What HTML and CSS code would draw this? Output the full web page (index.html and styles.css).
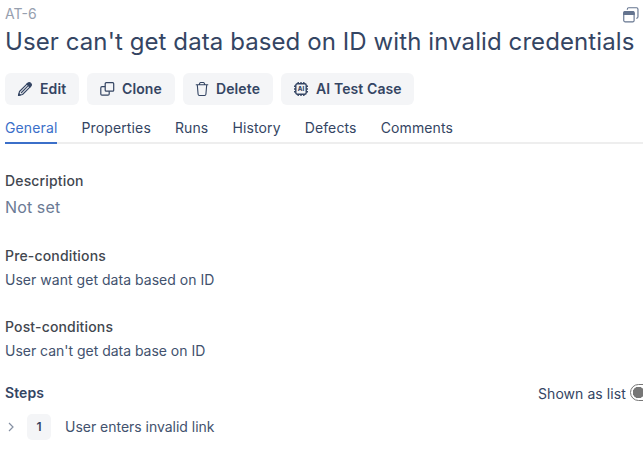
FILE: index.html
```html
<!DOCTYPE html>
<html lang="en">
<head>
<meta charset="utf-8">
<title>AT-6</title>
<link rel="stylesheet" href="styles.css">
</head>
<body>
<main class="case">
  <header class="top">
    <span class="case-id">AT-6</span>
    <svg class="window-icon" width="16" height="16" viewBox="0 0 17 17" fill="none" stroke="#64748f" stroke-width="1.2"><path d="M4.600 3V2.300Q4.600.8 6.100.8h8.300q1.500 0 1.500 1.500v8.100q0 1.500-1.500 1.500H14"/><rect x=".8" y="4.800" width="11" height="11" rx="1.500"/><path d="M.8 8V6.300Q.8 4.800 2.300 4.800h8q1.500 0 1.500 1.500V8z" fill="#64748f"/></svg>
  </header>
  <h1 class="title">User can't get data based on ID with invalid credentials</h1>
  <div class="actions">
    <button class="btn btn-edit"><svg width="16" height="16" viewBox="0 0 16 16" fill="none" stroke="#344563" stroke-width="1.1" stroke-linejoin="round"><path d="M1.500 14.500l1-4L10.400 2.600l3 3L5.500 13.500z"/><path d="M9.800 3.200l1.300-1.300q1.100-.9 2.200.1l.7.7q1 1.100.1 2.200l-1.300 1.300z" fill="#344563"/><path d="M4 12l6.800-6.800"/><path d="M1.500 14.500l.5-1.800 1.300 1.300z" fill="#344563"/></svg><span>Edit</span></button>
    <button class="btn btn-clone"><svg width="16" height="16" viewBox="0 0 16 16" fill="none" stroke="#344563" stroke-width="1.200"><rect x="6.200" y="1.700" width="8.500" height="8.500" rx="1"/><path d="M6.200 5.700H3q-1.200 0-1.200 1.200v6q0 1.200 1.200 1.200h6q1.200 0 1.200-1.200v-2.700"/></svg><span>Clone</span></button>
    <button class="btn btn-delete"><svg width="14" height="16" viewBox="0 0 14 16" fill="none" stroke="#344563" stroke-width="1.100" stroke-linecap="round"><path d="M1.200 3.800h11.600M4.200 3.500l.7-1.600q.2-.4.700-.4h2.800q.5 0 .7.400l.7 1.600M2.300 4l.8 9.300q.1 1.200 1.300 1.200h5.200q1.200 0 1.300-1.200L11.700 4"/></svg><span>Delete</span></button>
    <button class="btn btn-ai"><svg width="16" height="16" viewBox="0 0 16 16" fill="none" stroke="#344563" stroke-width="1.400"><rect x="2.800" y="2.800" width="10.400" height="10.400" rx="1.500"/><path d="M5.200 1v1.700M8 1v1.700M10.800 1v1.700M5.200 13.300V15M8 13.300V15M10.800 13.300V15M1 5.200h1.700M1 8h1.700M1 10.800h1.700M13.300 5.200H15M13.300 8H15M13.300 10.800H15"/><text class="chip-text" x="8" y="10.200" text-anchor="middle">AI</text></svg><span>AI Test Case</span></button>
  </div>
  <nav class="tabs">
    <a class="tab active">General</a>
    <a class="tab">Properties</a>
    <a class="tab">Runs</a>
    <a class="tab">History</a>
    <a class="tab">Defects</a>
    <a class="tab">Comments</a>
  </nav>
  <section class="field description">
    <h2>Description</h2>
    <p class="empty">Not set</p>
  </section>
  <section class="field pre">
    <h2>Pre-conditions</h2>
    <p>User want get data based on ID</p>
  </section>
  <section class="field post">
    <h2>Post-conditions</h2>
    <p>User can't get data base on ID</p>
  </section>
  <section class="steps">
    <div class="steps-head">
      <h2>Steps</h2>
      <div class="list-toggle"><span>Shown as list</span><i class="switch"></i></div>
    </div>
    <div class="step">
      <svg width="8" height="10" viewBox="0 0 8 10" fill="none" stroke="#8590a3" stroke-width="1.200"><path d="M2 1l4 4-4 4"/></svg>
      <span class="number">1</span>
      <span class="step-text">User enters invalid link</span>
    </div>
  </section>
</main>
</body>
</html>
```
FILE: styles.css
```css
* { box-sizing: border-box; }
body {
  margin: 0;
  background: #fff;
  color: #344563;
  font: 14px/20px Inter, sans-serif;
  letter-spacing: .1px;
  overflow: hidden;
}
h1, h2, p { margin: 0; }
.case { padding: 4px 0 0 5px; }
.top { display: flex; justify-content: space-between; height: 22px; padding-right: 4px; }
.case-id { color: #97a0af; letter-spacing: 0; }
.window-icon { margin-top: 3px; }
.title { font-size: 24px; line-height: 32px; font-weight: 400; letter-spacing: .09px; white-space: nowrap; }
.actions { display: flex; gap: 8px; margin-top: 15px; }
.btn {
  display: flex;
  align-items: center;
  height: 32px;
  padding: 0 0 0 12px;
  gap: 7px;
  border: 0;
  border-radius: 6px;
  background: #f4f5f7;
  color: #344563;
  font: 600 14px/20px Inter, sans-serif;
  letter-spacing: .1px;
  white-space: nowrap;
}
.btn-edit { width: 74px; }
.btn-clone { width: 88px; }
.btn-delete { width: 90px; }
.btn-ai { width: 133px; }
.chip-text { font: 800 6px Inter, sans-serif; letter-spacing: 0; fill: #344563; stroke: none; }
.tabs { display: flex; gap: 24px; height: 39px; padding-top: 13px; border-bottom: 2px solid #eee; letter-spacing: .13px; }
.tab { height: 26px; }
.tab.active { color: #3b6fc9; border-bottom: 2px solid #3b6fc9; }
.field h2 { color: #42474f; font-size: 14px; line-height: 20px; font-weight: 500; letter-spacing: .16px; }
.field p { color: #42526e; letter-spacing: .03px; }
.field .empty { color: #6b7a95; font-size: 16px; line-height: 24px; margin-top: 4px; letter-spacing: .12px; }
.description { margin-top: 27px; }
.pre { margin-top: 27px; }
.pre p, .post p { margin-top: 4px; }
.post { margin-top: 27px; }
.post p { letter-spacing: -.02px; }
.steps { margin-top: 22px; }
.steps-head { display: flex; justify-content: space-between; }
.steps h2 { font-size: 14px; line-height: 20px; font-weight: 600; }
.list-toggle { display: flex; margin-top: 1px; width: 105px; overflow: hidden; white-space: nowrap; letter-spacing: .06px; }
.switch {
  flex: none;
  width: 32px;
  height: 17px;
  margin: 0 0 0 4px;
  border: 1px solid #777;
  border-radius: 9px;
  background: radial-gradient(circle at 7.500px 7.500px, #777 5.500px, #fff 6px);
}
.step { display: flex; align-items: center; margin-top: 10px; padding-left: 2px; }
.number {
  width: 24px;
  height: 26px;
  margin: 0 14px 0 12px;
  border-radius: 5px;
  background: #f4f5f7;
  font-weight: 600;
  font-size: 12px;
  line-height: 26px;
  text-align: center;
}
.step-text { color: #42526e; line-height: 20px; letter-spacing: -.02px; margin-bottom: 1px; }
```
